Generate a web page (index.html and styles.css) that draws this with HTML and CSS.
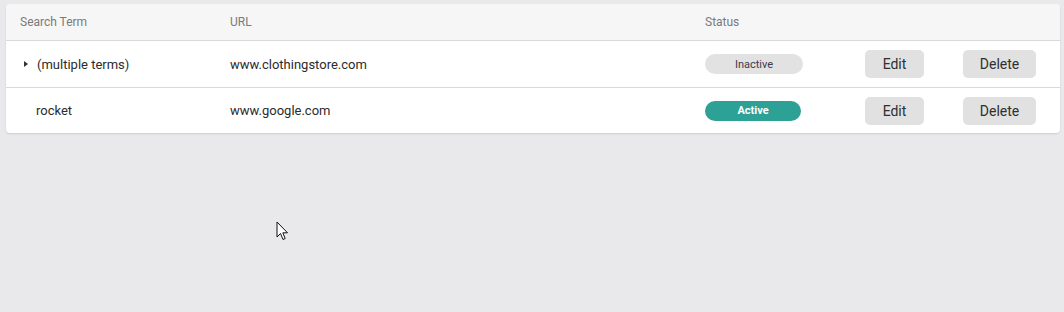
FILE: index.html
```html
<!DOCTYPE html>
<html>
<head>
<meta charset="utf-8">
<link rel="stylesheet" href="styles.css">
</head>
<body>
<div class="card">
  <div class="row head">
    <div class="c term">Search Term</div>
    <div class="c url">URL</div>
    <div class="c status">Status</div>
    <div class="c edit"></div>
    <div class="c del"></div>
  </div>
  <div class="row">
    <div class="c term"><span class="tri"></span>(multiple terms)</div>
    <div class="c url">www.clothingstore.com</div>
    <div class="c status"><span class="pill off">Inactive</span></div>
    <div class="c edit"><button class="btn edit-btn">Edit</button></div>
    <div class="c del"><button class="btn del-btn">Delete</button></div>
  </div>
  <div class="row last">
    <div class="c term"><span class="pad"></span>rocket</div>
    <div class="c url">www.google.com</div>
    <div class="c status"><span class="pill on">Active</span></div>
    <div class="c edit"><button class="btn edit-btn">Edit</button></div>
    <div class="c del"><button class="btn del-btn">Delete</button></div>
  </div>
</div>
<svg class="cursor" width="14" height="20" viewBox="0 0 14 20">
  <path d="M1 1 L1 16 L4.5 12.5 L7 18.5 L9.2 17.5 L6.8 11.8 L11.5 11.8 Z" fill="#fff" stroke="#111" stroke-width="1" stroke-linejoin="miter"/>
</svg>
</body>
</html>
```
FILE: styles.css
```css
html, body {
  margin: 0;
  padding: 0;
  background: #e9e9eb;
  font-family: Roboto, "Liberation Sans", Arial, sans-serif;
}
body {
  padding: 4px 4px 0 6px;
  height: 312px;
  box-sizing: border-box;
  position: relative;
}
.card {
  width: 1054px;
  background: #fff;
  border-radius: 4px;
  box-shadow: 0 1px 2px rgba(0,0,0,0.12);
  overflow: hidden;
}
.row {
  display: flex;
  align-items: center;
  height: 46px;
  border-bottom: 1px solid #d9d9d9;
  font-size: 13px;
  color: #2b2b2b;
}
.row.last {
  border-bottom: none;
  height: 45px;
}
.row.head {
  height: 36px;
  background: #f6f6f6;
  font-size: 12px;
  color: #7a7a7a;
}
.c {
  box-sizing: border-box;
  display: flex;
  align-items: center;
}
.term { width: 224px; padding-left: 14px; }
.url { width: 475px; }
.status { width: 160px; }
.edit { width: 98px; }
.del { flex: 1; }
.row:not(.head) .term { padding-left: 17px; }
.tri {
  width: 0;
  height: 0;
  border-top: 3px solid transparent;
  border-bottom: 3px solid transparent;
  border-left: 4px solid #333;
  margin-right: 9px;
  margin-left: 1px;
}
.pad { width: 13px; }
.pill {
  display: inline-flex;
  align-items: center;
  justify-content: center;
  height: 20px;
  border-radius: 10px;
  font-size: 11px;
}
.pill.off {
  width: 98px;
  background: #e2e2e2;
  color: #3a3a4a;
}
.pill.on {
  width: 96px;
  background: #2da195;
  color: #fff;
  font-weight: bold;
}
.btn {
  height: 28px;
  border: none;
  border-radius: 5px;
  background: #e1e1e1;
  color: #2f2f2f;
  font-family: Roboto, "Liberation Sans", Arial, sans-serif;
  font-size: 14px;
  padding: 0;
}
.edit-btn { width: 59px; }
.del-btn { width: 73px; }
.cursor {
  position: absolute;
  left: 276px;
  top: 221px;
}
```
